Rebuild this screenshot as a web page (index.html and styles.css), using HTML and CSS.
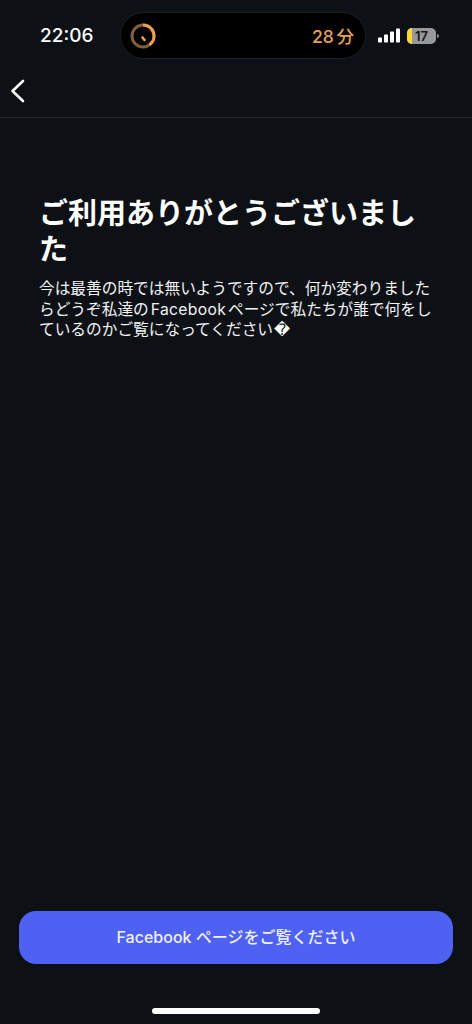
FILE: index.html
```html
<!DOCTYPE html>
<html lang="ja">
<head>
<meta charset="utf-8">
<title>ご利用ありがとうございました</title>
<link rel="stylesheet" href="styles.css">
</head>
<body>
<div class="page">
  <header class="status">
    <span class="time">22:06</span>
    <div class="island">
      <svg class="timer" width="28" height="28" viewBox="0 0 28 28">
        <circle cx="14" cy="14" r="11" fill="none" stroke="#80603a" stroke-width="3"/>
        <path d="M14 3A11 11 0 0 1 20.500 22.900" fill="none" stroke="#f0a04b" stroke-width="3"/>
        <path d="M13.500 15.500l2 2.500" stroke="#e8a055" stroke-width="2.600" stroke-linecap="round"/>
      </svg>
      <span class="remain">28 分</span>
    </div>
    <div class="indicators">
      <svg width="22" height="15" viewBox="0 0 22 15">
        <rect x="0" y="9.500" width="4" height="5" rx="0.800" fill="#fff"/>
        <rect x="6" y="6.500" width="4" height="8" rx="0.800" fill="#fff"/>
        <rect x="12" y="3.500" width="4" height="11" rx="0.800" fill="#fff"/>
        <rect x="18" y="0.500" width="4" height="14" rx="0.800" fill="#fff"/>
      </svg>
      <div class="battery"><span class="level"></span><span class="pct">17</span></div>
      <span class="nub"></span>
    </div>
  </header>
  <nav class="nav">
    <svg width="16" height="26" viewBox="0 0 16 26">
      <path d="M13 3L2.500 13 13 23" fill="none" stroke="#fff" stroke-width="2.600" stroke-linecap="round" stroke-linejoin="round"/>
    </svg>
  </nav>
  <main class="content">
    <h1 class="title">ご利用ありがとうございました</h1>
    <p class="text">今は最善の時では無いようですので、何か変わりましたらどうぞ私達の<span class="latin">Facebook</span>ページで私たちが誰で何をしているのかご覧になってください<span class="missing">&#xFFFD;</span></p>
  </main>
  <div class="action"><a class="button">Facebook ページをご覧ください</a></div>
  <div class="home"><span class="bar"></span></div>
</div>
</body>
</html>
```
FILE: styles.css
```css
* { box-sizing: border-box; }
html, body { margin: 0; height: 100%; }
body {
  background: #0d1116;
  color: #fff;
  font-family: Inter, "Noto Sans CJK JP", sans-serif;
}
.page {
  display: flex;
  flex-direction: column;
  height: 1024px;
  overflow: hidden;
}
.status {
  display: flex;
  align-items: center;
  height: 71px;
  padding: 0 0 0 40px;
}
.time {
  width: 80px;
  font-size: 19px;
  font-weight: 500;
}
.island {
  display: flex;
  align-items: center;
  justify-content: space-between;
  width: 246px;
  height: 47px;
  padding: 0 11px 0 8px;
  background: #000;
  border: 1px solid #1c2026;
  border-radius: 24px;
}
.timer { display: block; }
.remain {
  color: #e6a15c;
  font-size: 17.500px;
  font-weight: 500;
  word-spacing: -2px;
}
.indicators {
  display: flex;
  align-items: center;
  margin-left: 12px;
}
.battery {
  position: relative;
  display: flex;
  align-items: center;
  justify-content: center;
  width: 29px;
  height: 16px;
  margin-left: 7px;
  overflow: hidden;
  background: #98989c;
  border-radius: 5px;
}
.level {
  position: absolute;
  top: 0;
  bottom: 0;
  left: 0;
  width: 5px;
  background: #f8da30;
}
.pct {
  position: relative;
  color: #141416;
  font-size: 13px;
  font-weight: 600;
  line-height: 16px;
}
.nub {
  width: 2px;
  height: 4px;
  margin-left: 1px;
  background: #8a8a8e;
  border-radius: 0 2px 2px 0;
}
.nav {
  display: flex;
  align-items: center;
  height: 47px;
  padding: 0 0 7px 10px;
  border-bottom: 1px solid #23272d;
}
.nav svg { display: block; }
.content {
  flex: 1;
  padding: 78px 39px 0;
}
.title {
  margin: 0 0 11px;
  font-size: 29px;
  font-weight: 600;
  line-height: 36px;
}
.text {
  margin: 0;
  font-size: 15.700px;
  line-height: 20.500px;
  color: #f2f3f5;
}
.latin {
  margin: 0 2px;
  letter-spacing: 0.300px;
}
.missing {
  margin-left: 1px;
  font-family: "DejaVu Sans", sans-serif;
  color: #fff;
}
.action { padding: 0 19px; }
.button {
  display: flex;
  align-items: center;
  justify-content: center;
  height: 53px;
  padding-bottom: 3px;
  background: #4e61f3;
  border-radius: 17px;
  color: #eef0ff;
  font-size: 16px;
  font-weight: 500;
}
.home {
  display: flex;
  justify-content: center;
  height: 60px;
  padding-top: 44px;
}
.bar {
  width: 168px;
  height: 6px;
  background: #fff;
  border-radius: 3px;
}
```
